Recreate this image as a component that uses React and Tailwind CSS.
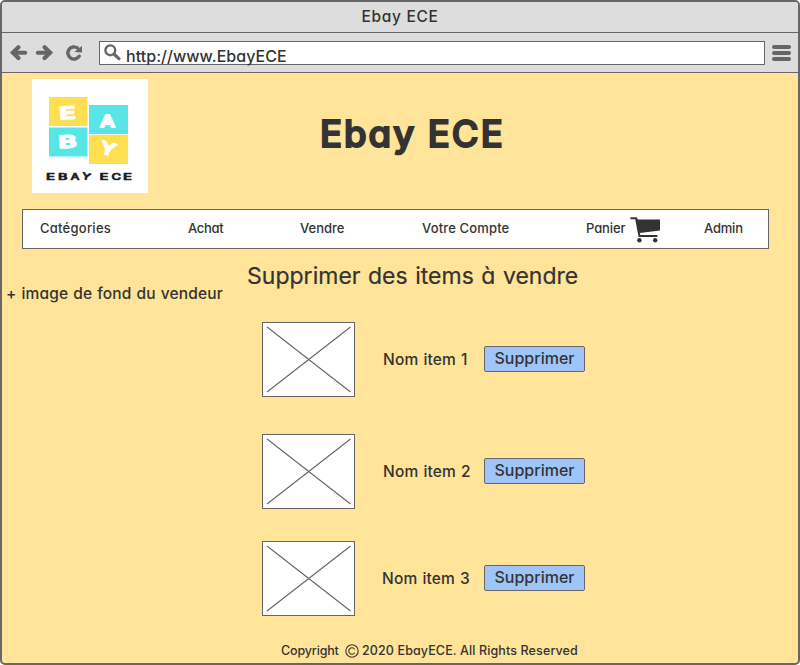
const items = [
  { name: 'Nom item 1', gap: 'mt-0', label: 'ml-[28px] w-[101px]' },
  { name: 'Nom item 2', gap: 'mt-[37px]', label: 'ml-[28px] w-[101px]' },
  { name: 'Nom item 3', gap: 'mt-[32px]', label: 'ml-[27px] w-[102px]' },
];

function TitleBar() {
  return (
    <div className="flex h-[31px] items-center justify-center border-b border-[#666] bg-[#ddd] pb-px text-[15.5px] leading-none tracking-[0.7px]">
      Ebay ECE
    </div>
  );
}

function Toolbar() {
  return (
    <div className="flex h-[40px] items-center border-b border-[#666] bg-[#ddd] pl-[8px] text-[#666]">
      <svg width="18" height="16" viewBox="0 0 18 16" fill="none" stroke="currentColor" strokeLinecap="round" className="shrink-0">
        <path d="M8.4 2.3 2.9 7.7l5.5 5.4" strokeWidth="4.2" />
        <path d="M4 7.7h11.2" strokeWidth="4" />
      </svg>
      <svg width="18" height="16" viewBox="0 0 18 16" fill="none" stroke="currentColor" strokeLinecap="round" className="ml-[7px] shrink-0">
        <path d="M9.6 2.3 15.1 7.7l-5.5 5.4" strokeWidth="4.2" />
        <path d="M14 7.7H2.8" strokeWidth="4" />
      </svg>
      <svg width="18" height="16" viewBox="0 0 18 16" fill="none" stroke="currentColor" className="ml-[12px] shrink-0">
        <path d="M12.6 3.1A6.1 6.1 0 1 0 14.2 11.2" strokeWidth="3.4" strokeLinecap="round" />
        <path d="M17 0.9V7.6L9.4 6.9Z" fill="currentColor" stroke="none" />
      </svg>
      <div className="ml-[16px] flex h-[24px] w-[666px] shrink-0 border border-[#666] bg-white pl-[4px]">
        <svg width="17" height="17" viewBox="0 0 17 17" fill="none" stroke="currentColor" className="mt-[2px] shrink-0">
          <circle cx="6.3" cy="6.3" r="4.9" strokeWidth="2.4" />
          <path d="m10.3 10.3 4.6 4.3" strokeWidth="3.2" strokeLinecap="round" />
        </svg>
        <span className="ml-[5px] mt-[2px] text-[16px] leading-[24px] tracking-[0.05px] text-[#333]">http://www.EbayECE</span>
      </div>
      <div className="ml-[7px] flex w-[19px] shrink-0 flex-col gap-[2px]">
        <div className="h-[4px] rounded-[2px] bg-[#666]" />
        <div className="h-[4px] rounded-[2px] bg-[#666]" />
        <div className="h-[4px] rounded-[2px] bg-[#666]" />
      </div>
    </div>
  );
}

function Logo() {
  return (
    <svg width="116" height="114" viewBox="0 0 116 114" className="shrink-0 bg-white font-['Inter',sans-serif]">
      <rect x="17" y="18" width="38.5" height="29" fill="#fddf52" />
      <rect x="57" y="26" width="39" height="29" fill="#58e5e5" />
      <rect x="17" y="48.5" width="38.5" height="29" fill="#58e5e5" />
      <rect x="57" y="56" width="39" height="29" fill="#fddf52" />
      <g fill="#fff" stroke="#fff" strokeWidth="1.8" strokeLinejoin="round" fontSize="16.5" fontWeight="500">
        <text x="27.5" y="39.8" textLength="16" lengthAdjust="spacingAndGlyphs" transform="rotate(-4 35 34)">E</text>
        <text x="68" y="48" textLength="15" lengthAdjust="spacingAndGlyphs">A</text>
        <text x="26.5" y="68.5" textLength="18" lengthAdjust="spacingAndGlyphs" transform="rotate(-3 35 62)">B</text>
        <text x="68.5" y="75.5" textLength="15" lengthAdjust="spacingAndGlyphs" transform="rotate(16 76 70)">Y</text>
      </g>
      <g fill="#1c1c1c" stroke="#1c1c1c" strokeWidth="0.7" strokeLinejoin="round" fontSize="9" fontWeight="500">
        <text x="14" y="101" textLength="9" lengthAdjust="spacingAndGlyphs">E</text>
        <text x="26" y="101" textLength="9.5" lengthAdjust="spacingAndGlyphs">B</text>
        <text x="38.5" y="101" textLength="9" lengthAdjust="spacingAndGlyphs">A</text>
        <text x="50" y="100.5" textLength="9" lengthAdjust="spacingAndGlyphs" transform="rotate(12 54 97)">Y</text>
        <text x="67.5" y="101" textLength="9" lengthAdjust="spacingAndGlyphs">E</text>
        <text x="79.5" y="101" textLength="9.5" lengthAdjust="spacingAndGlyphs">C</text>
        <text x="91" y="101" textLength="9" lengthAdjust="spacingAndGlyphs">E</text>
      </g>
    </svg>
  );
}

function Cart() {
  return (
    <svg width="31" height="27" viewBox="0 0 31 27" fill="#333" className="ml-[4px] mt-[3px] shrink-0">
      <path d="M1.2 0.2H6.8L7.8 2.4H30V13.6L9.8 15.9 10.2 18H27.5V20H8.6L5.2 2.2H1.2A1 1 0 0 1 1.2 0.2Z" />
      <circle cx="9.4" cy="23.2" r="2.2" />
      <circle cx="25.2" cy="23.2" r="2.2" />
    </svg>
  );
}

function Nav() {
  return (
    <nav className="ml-[20px] mt-[16px] flex h-[40px] w-[747px] items-center border border-[#666] bg-white pb-px text-[13px] leading-none">
      <span className="ml-[17px] w-[148px] shrink-0 tracking-[0.25px]">Catégories</span>
      <span className="w-[112px] shrink-0 tracking-[-0.3px]">Achat</span>
      <span className="w-[122px] shrink-0">Vendre</span>
      <span className="w-[164px] shrink-0 tracking-[0.15px]">Votre Compte</span>
      <span className="flex w-[118px] shrink-0 items-center">
        <span className="w-[40px] tracking-[-0.1px]">Panier</span>
        <Cart />
      </span>
      <span className="tracking-[-0.2px]">Admin</span>
    </nav>
  );
}

function Placeholder() {
  return (
    <div className="h-[75px] w-[93px] shrink-0 border border-[#666] bg-white">
      <svg width="91" height="73" viewBox="0 0 91 73" stroke="#666" strokeWidth="1.1">
        <path d="M4 4 87.5 69M87.5 4 4 69" />
      </svg>
    </div>
  );
}

export default function App() {
  return (
    <div className="h-[665px] w-[800px] bg-white font-['Inter','Liberation_Sans',sans-serif] font-medium text-[#333] [font-feature-settings:'cv11']">
      <div className="flex h-[665px] w-[800px] flex-col overflow-hidden whitespace-nowrap rounded-[5px] border-2 border-[#666] bg-[#ffe499]">
        <TitleBar />
        <Toolbar />
        <main className="flex flex-col">
          <header className="flex pl-[30px] pt-[6px]">
            <Logo />
            <h1 className="ml-[172px] mt-[30px] text-[36.5px] font-medium leading-[50px] tracking-[2px] [stroke-linejoin:round] [-webkit-text-stroke:2px_#333]">Ebay ECE</h1>
          </header>
          <Nav />
          <div className="flex pl-[4px]">
            <p className="w-[241px] shrink-0 pt-[33px] text-[15.5px] leading-[24px] tracking-[0.18px] [word-spacing:0.6px]">+ image de fond du vendeur</p>
            <h2 className="pt-[12px] text-[23px] font-normal leading-[30px] tracking-[0.02px] [word-spacing:1px] [-webkit-text-stroke:0.2px_#333]">Supprimer des items à vendre</h2>
          </div>
          <ul className="mt-[16px] pl-[260px]">
            {items.map((item) => (
              <li key={item.name} className={`flex items-center ${item.gap}`}>
                <Placeholder />
                <span className={`shrink-0 text-[15.5px] leading-none tracking-[0.2px] [word-spacing:0.6px] ${item.label}`}>{item.name}</span>
                <button className="mb-[2px] flex h-[26px] w-[101px] items-center justify-center rounded-[2px] border border-[#666] bg-[#9fc5f8] pb-px text-[16px] font-medium leading-none">
                  Supprimer
                </button>
              </li>
            ))}
          </ul>
          <footer className="mt-[24px] flex items-center pl-[279px] text-[12.5px] leading-[21px]">
            <span className="w-[64px] tracking-[-0.15px]">Copyright</span>
            <svg width="14" height="14" viewBox="0 0 14 14" fill="none" stroke="#333" strokeWidth="1.1" strokeLinecap="round" className="mr-[3px] shrink-0">
              <circle cx="7" cy="7" r="6.2" />
              <path d="M9.5 5A3.2 3.2 0 1 0 9.5 9" />
            </svg>
            <span className="tracking-[0.12px]">2020 EbayECE. All Rights Reserved</span>
          </footer>
        </main>
      </div>
    </div>
  );
}
